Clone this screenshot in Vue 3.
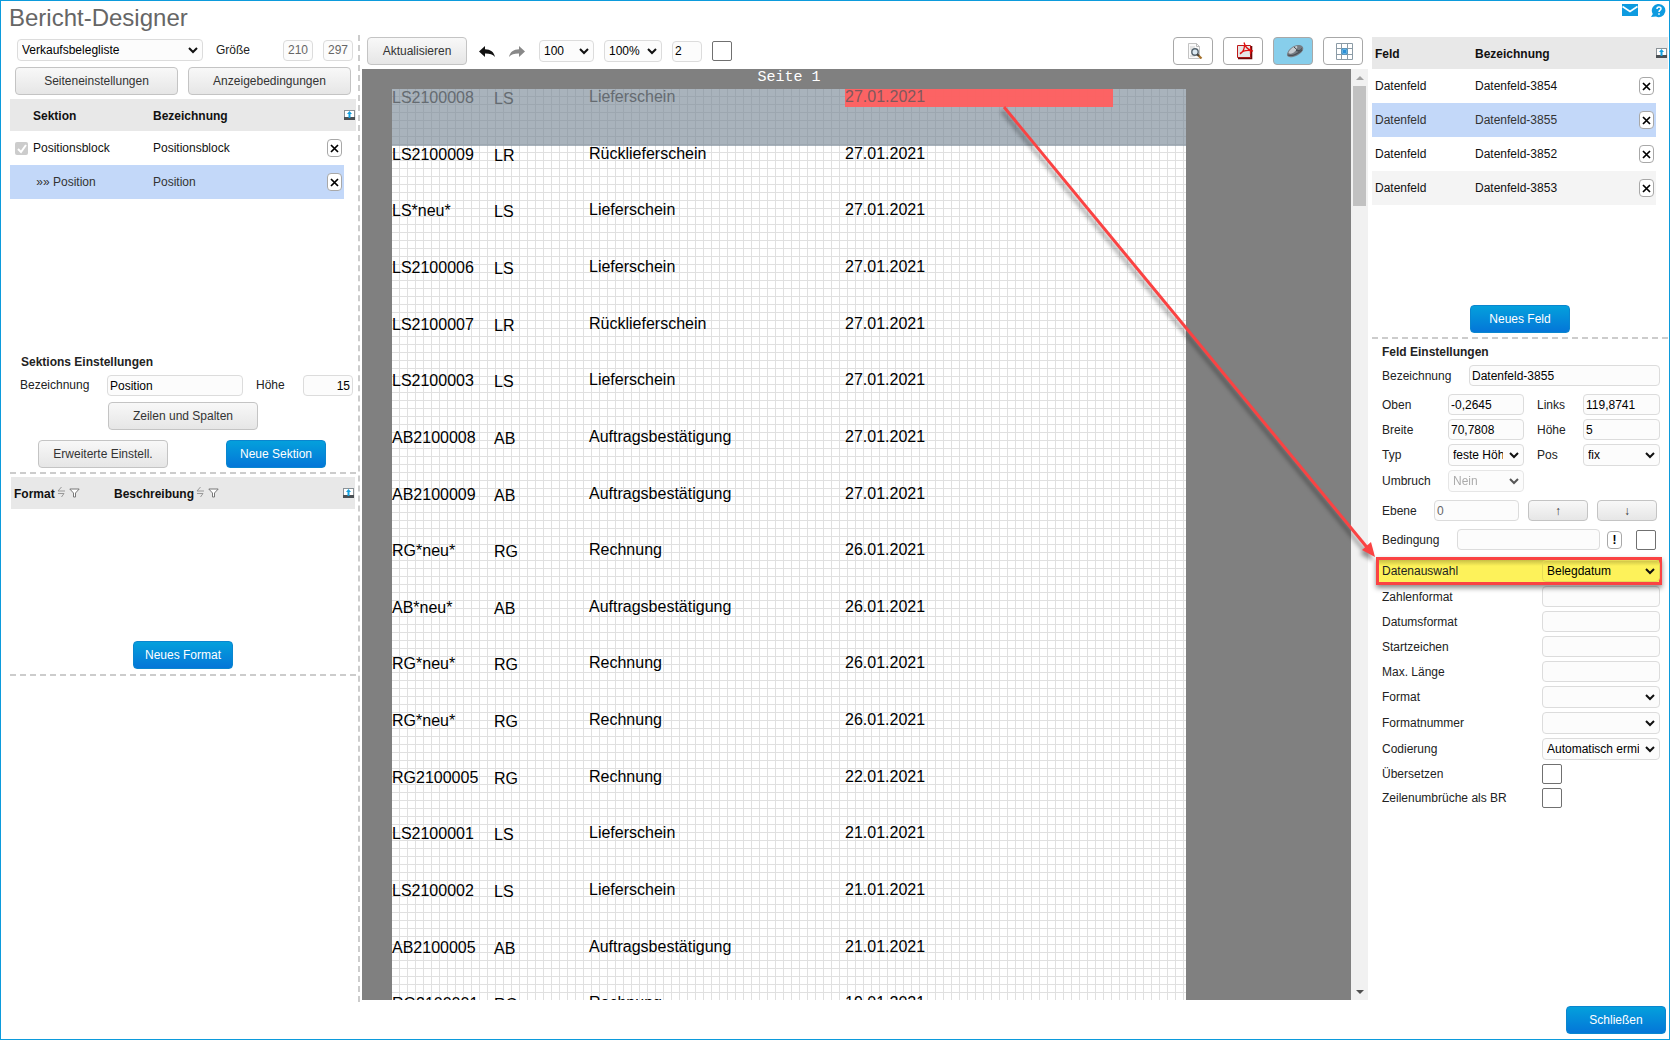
<script setup>
import { ref } from 'vue'

const report = ref('Verkaufsbelegliste')
const selectedField = ref('Datenfeld-3855')

const fields = ['Datenfeld-3854', 'Datenfeld-3855', 'Datenfeld-3852', 'Datenfeld-3853']

const types = {
  LS: 'Lieferschein',
  LR: 'Rücklieferschein',
  AB: 'Auftragsbestätigung',
  RG: 'Rechnung',
}

const documents = [
  ['LS2100008', 'LS', '27.01.2021'],
  ['LS2100009', 'LR', '27.01.2021'],
  ['LS*neu*', 'LS', '27.01.2021'],
  ['LS2100006', 'LS', '27.01.2021'],
  ['LS2100007', 'LR', '27.01.2021'],
  ['LS2100003', 'LS', '27.01.2021'],
  ['AB2100008', 'AB', '27.01.2021'],
  ['AB2100009', 'AB', '27.01.2021'],
  ['RG*neu*', 'RG', '26.01.2021'],
  ['AB*neu*', 'AB', '26.01.2021'],
  ['RG*neu*', 'RG', '26.01.2021'],
  ['RG*neu*', 'RG', '26.01.2021'],
  ['RG2100005', 'RG', '22.01.2021'],
  ['LS2100001', 'LS', '21.01.2021'],
  ['LS2100002', 'LS', '21.01.2021'],
  ['AB2100005', 'AB', '21.01.2021'],
  ['RG2100001', 'RG', '19.01.2021'],
]

const textOptions = [
  { id: 'zahlenformat', label: 'Zahlenformat' },
  { id: 'datumsformat', label: 'Datumsformat' },
  { id: 'startzeichen', label: 'Startzeichen' },
  { id: 'maxlaenge', label: 'Max. Länge' },
]
const selectOptions = [
  { id: 'format', label: 'Format', value: '' },
  { id: 'formatnummer', label: 'Formatnummer', value: '' },
  { id: 'codierung', label: 'Codierung', value: 'Automatisch ermitteln' },
]
const checkOptions = [
  { id: 'uebersetzen', label: 'Übersetzen' },
  { id: 'umbruchbr', label: 'Zeilenumbrüche als BR' },
]
</script>

<template>
  <div class="designer">
    <svg class="symbols" aria-hidden="true">
      <symbol id="i-export" viewBox="0 0 11 10">
        <path d="M0 0h11v10H0z" fill="#8b9297" />
        <path d="M1 1h9v6H1z" fill="#fff" />
        <path d="M0 7h11v3H0z" fill="#4b5054" />
        <path d="M5.500 1L8 4H6.500v4h-2V4H3z" fill="#14a0de" />
      </symbol>
      <symbol id="i-x" viewBox="0 0 9 9">
        <path d="M1 1l7 7M8 1L1 8" stroke="#000" stroke-width="1.700" fill="none" />
      </symbol>
      <symbol id="i-sort" viewBox="0 0 8 12">
        <path d="M4.500 1L1 5h7M1 7.500h6L4.500 11" stroke="#999" fill="none" />
      </symbol>
      <symbol id="i-filter" viewBox="0 0 11 10">
        <path d="M.8 1h9.400L6.500 5v4H4.500V5z" stroke="#777" fill="#fff" />
      </symbol>
    </svg>

    <header class="head">
      <h1>Bericht-Designer</h1>
      <nav class="head-links">
        <a href="#mail" aria-label="Nachricht">
          <svg width="16" height="12" viewBox="0 0 16 12"><path d="M0 0h16v12H0z" fill="#0e9be0" /><path d="M.5 2.500L8 7.500l7.500-5" stroke="#fff" stroke-width="1.600" fill="none" /></svg>
        </a>
        <a href="#hilfe" aria-label="Hilfe">
          <svg width="15" height="14" viewBox="0 0 15 14"><path d="M8 0a6.600 6.600 0 1 1-3 12.600L0 13l1.800-3A6.600 6.600 0 0 1 8 0z" fill="#0e9be0" /><path d="M6 5c0-2.600 4-2.600 4-.3C10 6.200 8 6.200 8 8" stroke="#fff" stroke-width="1.500" fill="none" /><path d="M7.200 9.200h1.600v1.600H7.200z" fill="#fff" /></svg>
        </a>
      </nav>
    </header>

    <main class="main">
      <aside class="left">
        <div class="line report-line">
          <select v-model="report" class="grow" aria-label="Bericht"><option>Verkaufsbelegliste</option></select>
          <label class="size-label" for="breite-mm">Größe</label>
          <input id="breite-mm" class="size" value="210" disabled>
          <input class="size" value="297" aria-label="Höhe in mm" disabled>
        </div>
        <div class="line page-buttons">
          <button class="btn">Seiteneinstellungen</button>
          <button class="btn">Anzeigebedingungen</button>
        </div>

        <div class="section-list">
          <table class="list">
            <colgroup><col class="c-tick"><col class="c-sec"><col><col class="c-del"><col class="c-end"></colgroup>
            <thead>
              <tr><th></th><th>Sektion</th><th>Bezeichnung</th><th></th><th><svg class="export"><use href="#i-export" /></svg></th></tr>
            </thead>
            <tbody>
              <tr>
                <td><input class="tick" type="checkbox" aria-label="Positionsblock" checked disabled></td>
                <td>Positionsblock</td><td>Positionsblock</td>
                <td><button class="del" aria-label="Löschen"><svg><use href="#i-x" /></svg></button></td>
                <td class="blank"></td>
              </tr>
              <tr class="selected">
                <td></td><td>&nbsp;»» Position</td><td>Position</td>
                <td><button class="del" aria-label="Löschen"><svg><use href="#i-x" /></svg></button></td>
                <td class="blank"></td>
              </tr>
            </tbody>
          </table>
        </div>

        <section class="section-form">
          <h2>Sektions Einstellungen</h2>
          <div class="line">
            <label class="sec-name" for="sek-bez">Bezeichnung</label>
            <input id="sek-bez" class="grow" value="Position">
            <label class="sec-height" for="sek-hoehe">Höhe</label>
            <input id="sek-hoehe" class="num" value="15">
          </div>
          <button class="btn rows-btn">Zeilen und Spalten</button>
          <div class="line section-actions">
            <button class="btn ext-btn">Erweiterte Einstell.</button>
            <button class="btn primary">Neue Sektion</button>
          </div>
        </section>

        <section class="format-block">
          <table class="list format-list">
            <colgroup><col class="c-format"><col><col class="c-end"></colgroup>
            <thead>
              <tr>
                <th>Format<svg class="sort"><use href="#i-sort" /></svg><svg class="filter"><use href="#i-filter" /></svg></th>
                <th>Beschreibung<svg class="sort"><use href="#i-sort" /></svg><svg class="filter"><use href="#i-filter" /></svg></th>
                <th><svg class="export"><use href="#i-export" /></svg></th>
              </tr>
            </thead>
          </table>
          <button class="btn primary format-btn">Neues Format</button>
        </section>
      </aside>

      <section class="middle">
        <div class="toolbar">
          <button class="btn refresh">Aktualisieren</button>
          <button class="plain" aria-label="Rückgängig">
            <svg width="16" height="12" viewBox="0 0 16 12"><path d="M0 5.500L6 0v3.300c5.500.2 9 2.700 10 7.700-2.500-3-5.500-3.700-10-3.600V11z" fill="#111" /></svg>
          </button>
          <button class="plain redo" aria-label="Wiederholen">
            <svg width="16" height="12" viewBox="0 0 16 12"><path d="M16 5.500L10 0v3.300C4.500 3.500 1 6 0 11c2.500-3 5.500-3.700 10-3.600V11z" fill="#888" /></svg>
          </button>
          <select class="rowsel" aria-label="Anzahl"><option>100</option></select>
          <select class="zoomsel" aria-label="Zoom"><option>100%</option></select>
          <input class="size" value="2" aria-label="Raster">
          <input class="box" type="checkbox" aria-label="Raster aktiv">
          <span class="tools">
            <button class="tool" aria-label="Vorschau">
              <svg width="16" height="16" viewBox="0 0 16 16"><path d="M1.500.5h8l3 3v12h-11z" fill="#fafafa" stroke="#c3c3c3" /><path d="M9.500.5v3h3" fill="none" stroke="#bbb" /><path d="M3 4h5M3 6h2M3 13h5" stroke="#ccc" /><circle cx="8" cy="9" r="3.200" fill="#dce9f2" stroke="#56646e" stroke-width="1.400" /><path d="M10.500 11.500l4 4" stroke="#a5702a" stroke-width="2.200" /><path d="M10 11l1.800 1.800" stroke="#444" stroke-width="1.800" /></svg>
            </button>
            <button class="tool" aria-label="PDF">
              <svg width="18" height="18" viewBox="0 0 18 18"><path d="M1.500 3.500h13v12h-13z" fill="#e6e6e6" stroke="#c01818" /><path d="M2 16.500h13.500V4" stroke="#6e0a0a" stroke-width="1.600" fill="none" /><path d="M8 .5c1 4 3 7 8 8.500M8.500 3c0 4-1.500 7-4.500 9M4 11.500c3-3 7-4 13-2.500M14.500 6v6" stroke="#e01010" stroke-width="1.300" fill="none" /></svg>
            </button>
            <button class="tool active" aria-label="Maus">
              <svg width="18" height="14" viewBox="0 0 18 14"><path d="M1 10C2 5 8 1 12 1c4 0 6 2 5 5-1 3-6 6-10 7-3 .6-6.500 0-6-3z" fill="#777d84" /><path d="M2.500 8.500C4 5 8 2.300 11 2c1 2-1 5-4 7-2 1-4 1-4.500-.5z" fill="#c6cbd0" /><path d="M8 3l5 4.500M10 6.500c2 1 4 0 6-2" stroke="#40454b" fill="none" /><path d="M2 11c4 1.500 10-1 14-5" stroke="#4c5157" stroke-width="1.300" fill="none" /></svg>
            </button>
            <button class="tool" aria-label="Raster">
              <svg width="17" height="17" viewBox="0 0 17 17"><path d="M.5.500h16v16H.5zM5.500.500v16M11.500.500v16M.5 5.500h16M.5 11.500h16" fill="none" stroke="#8b9ba6" /><path d="M6 6h5v5H6z" fill="#9ed3f2" stroke="#2f8fd0" /><path d="M7 7h3v3H7z" fill="#2a8fd6" /></svg>
            </button>
          </span>
        </div>

        <div class="viewer">
          <div class="canvas">
            <div class="page">
              <div class="page-title">Seite 1</div>
              <div class="paper">
                <div v-for="(doc, i) in documents" :key="i" class="record" :class="{ current: i === 0 }">
                  <span class="no">{{ doc[0] }}</span>
                  <span class="kind">{{ doc[1] }}</span>
                  <span class="name">{{ types[doc[1]] }}</span>
                  <span class="date">{{ doc[2] }}</span>
                </div>
              </div>
            </div>
          </div>
          <div class="scrollbar" aria-hidden="true">
            <span class="up"></span><span class="thumb"></span><span class="down"></span>
          </div>
        </div>
      </section>

      <aside class="right">
        <div class="field-list">
          <table class="list">
            <colgroup><col class="c-field"><col><col class="c-del"><col class="c-end"></colgroup>
            <thead>
              <tr><th>Feld</th><th>Bezeichnung</th><th></th><th><svg class="export"><use href="#i-export" /></svg></th></tr>
            </thead>
            <tbody>
              <tr v-for="name in fields" :key="name" :class="{ selected: name === selectedField }" @click="selectedField = name">
                <td>Datenfeld</td><td>{{ name }}</td>
                <td><button class="del" aria-label="Löschen"><svg><use href="#i-x" /></svg></button></td>
                <td class="blank"></td>
              </tr>
            </tbody>
          </table>
          <button class="btn primary new-field">Neues Feld</button>
        </div>

        <section class="field-form">
          <h2>Feld Einstellungen</h2>
          <div class="line wide-gap">
            <label class="f-name" for="f-bez">Bezeichnung</label>
            <input id="f-bez" class="grow" value="Datenfeld-3855">
          </div>
          <div class="line">
            <label class="f-a" for="f-oben">Oben</label><input id="f-oben" class="f-in" value="-0,2645">
            <label class="f-b" for="f-links">Links</label><input id="f-links" class="grow" value="119,8741">
          </div>
          <div class="line">
            <label class="f-a" for="f-breite">Breite</label><input id="f-breite" class="f-in" value="70,7808">
            <label class="f-b" for="f-hoehe">Höhe</label><input id="f-hoehe" class="grow" value="5">
          </div>
          <div class="line">
            <label class="f-a" for="f-typ">Typ</label><select id="f-typ" class="f-in"><option>feste Höhe</option></select>
            <label class="f-b" for="f-pos">Pos</label><select id="f-pos" class="grow"><option>fix</option></select>
          </div>
          <div class="line wide-gap">
            <label class="f-a" for="f-umbruch">Umbruch</label><select id="f-umbruch" class="f-in" disabled><option>Nein</option></select>
          </div>
          <div class="line wide-gap">
            <label class="f-level" for="f-ebene">Ebene</label><input id="f-ebene" class="level" value="0" disabled>
            <button class="btn arrow">↑</button><button class="btn arrow">↓</button>
          </div>
          <div class="line condition">
            <label class="f-cond" for="f-bed">Bedingung</label><input id="f-bed" class="grow">
            <button class="del bang">!</button><input class="box cond-box" type="checkbox" aria-label="Bedingung aktiv">
          </div>
          <div class="line marked">
            <label for="f-daten">Datenauswahl</label><select id="f-daten" class="opt"><option>Belegdatum</option></select>
          </div>
          <div v-for="o in textOptions" :key="o.id" class="line">
            <label :for="o.id">{{ o.label }}</label><input :id="o.id" class="opt">
          </div>
          <div v-for="o in selectOptions" :key="o.id" class="line">
            <label :for="o.id">{{ o.label }}</label><select :id="o.id" class="opt"><option>{{ o.value }}</option></select>
          </div>
          <div v-for="o in checkOptions" :key="o.id" class="line">
            <label :for="o.id">{{ o.label }}</label><span class="opt"><input :id="o.id" class="box" type="checkbox"></span>
          </div>
        </section>
      </aside>

      <svg class="pointer" width="380" height="460" viewBox="0 0 380 460" aria-hidden="true">
        <path d="M4 3L370 447" stroke="#fa4343" stroke-width="3" />
        <path d="M375 453L362 446L371 438z" fill="#fa4343" />
      </svg>
    </main>

    <footer class="foot"><button class="btn primary">Schließen</button></footer>
  </div>
</template>

<style>
body { margin: 0; }
</style>

<style scoped>
* { box-sizing: border-box; }
.designer {
  display: flex;
  flex-direction: column;
  height: 100vh;
  border: 1px solid #0c9bdc;
  background: #fff;
  color: #222;
  font: 12px/16px "Liberation Sans", Arial, sans-serif;
  overflow: hidden;
}
.symbols { position: absolute; width: 0; height: 0; }
.head {
  display: flex;
  justify-content: space-between;
  flex: none;
  height: 34px;
  padding: 2px 3px 0 8px;
}
h1 { margin: 0; font-size: 24px; line-height: 30px; font-weight: 400; color: #666; }
.head-links { display: flex; gap: 13px; }
.head-links svg { display: block; margin-top: 1px; }
.main {
  position: relative;
  display: grid;
  grid-template-columns: 359px minmax(0, 1fr) 297px;
  flex: 1;
  min-height: 0;
}

/* controls */
input, select, button { font: inherit; color: #000; margin: 0; }
input, select {
  min-width: 0;
  height: 21px;
  border: 1px solid #dcdcdc;
  border-radius: 4px;
  background-color: #fcfcfc;
  padding: 0 2px;
}
select {
  appearance: none;
  height: 22px;
  padding: 0 20px 0 4px;
  background-image: url("data:image/svg+xml,%3Csvg xmlns='http://www.w3.org/2000/svg' width='10' height='7'%3E%3Cpath d='M1 1l4 4 4-4' fill='none' stroke='%23111' stroke-width='2'/%3E%3C/svg%3E");
  background-repeat: no-repeat;
  background-position: right 4px center;
}
input:disabled { color: #666; }
select:disabled { color: #888; opacity: .7; }
.grow { flex: 1; }
.btn {
  height: 28px;
  padding: 0;
  border: 1px solid #c4c4c4;
  border-radius: 4px;
  background: linear-gradient(#f8f8f8, #e6e6e6);
  color: #333;
}
.primary {
  width: 100px;
  border-color: #0a86cf;
  background: linear-gradient(#04a0dc, #0476d8);
  color: #fff;
}
.box {
  appearance: none;
  flex: none;
  display: block;
  width: 20px;
  height: 20px;
  padding: 0;
  border: 1px solid #707070;
  border-radius: 2px;
  background: #fff;
}
.del {
  display: flex;
  align-items: center;
  justify-content: center;
  width: 15px;
  height: 18px;
  padding: 0;
  border: 1px solid #a8a8a8;
  border-radius: 4px;
  background: #fff;
}
.del svg { width: 9px; height: 9px; }
.line { display: flex; align-items: center; }
h2 { margin: 0; font-size: 12px; line-height: 16px; font-weight: 700; }

/* lists */
.list { width: 100%; table-layout: fixed; border-collapse: collapse; color: #111; }
.list th { height: 32px; padding: 2px 0 0; background: #e8e8e8; text-align: left; color: #111; }
.list td { height: 34px; padding: 0; }
.list tbody tr:nth-child(4) td { background: #f4f4f4; }
.list tbody tr.selected td { background: #c3d8f9; color: #333; }
.list tbody tr td.blank { background: #fff; }
.c-tick { width: 23px; }
.c-sec { width: 120px; }
.c-del { width: 17px; }
.c-end { width: 12px; }
.c-field { width: 100px; }
.c-format { width: 100px; }
.export { display: block; width: 11px; height: 10px; margin-bottom: 3px; }
.sort { width: 8px; height: 12px; margin-left: 2px; }
.filter { width: 11px; height: 10px; margin-left: 4px; }
.tick {
  appearance: none;
  display: block;
  width: 13px;
  height: 13px;
  margin-left: 5px;
  padding: 0;
  border: 0;
  border-radius: 2px;
  background: #ccc url("data:image/svg+xml,%3Csvg xmlns='http://www.w3.org/2000/svg' width='13' height='13'%3E%3Cpath d='M3 7l3 3 5-7' fill='none' stroke='%23fff' stroke-width='2'/%3E%3C/svg%3E");
}

/* left */
.left { padding: 4px 2px 0 9px; border-right: 2px dashed #ccc; }
.report-line { padding: 0 3px 0 7px; }
.size-label { width: 67px; margin-left: 13px; }
.size { width: 30px; text-align: center; }
.size + .size { margin-left: 10px; }
.page-buttons { gap: 10px; margin-top: 6px; padding: 0 5px; }
.page-buttons .btn { flex: 1; }
.section-list { height: 255px; margin-top: 4px; }
.section-form { height: 120px; padding: 0 3px 0 10px; border-bottom: 2px dashed #ccc; }
.section-form h2 { margin: 0 0 5px 1px; }
.section-form label { padding-bottom: 2px; }
.sec-name { width: 87px; }
.sec-height { width: 47px; margin-left: 13px; }
.num { width: 50px; text-align: right; }
.rows-btn { display: block; width: 150px; margin: 6px 0 10px 88px; }
.section-actions { justify-content: space-between; padding: 0 27px 0 18px; }
.ext-btn { width: 130px; }
.format-block { height: 202px; padding: 3px 1px 0; border-bottom: 2px dashed #ccc; }
.format-list th { padding-left: 3px; }
.format-list th:last-child { padding-left: 0; }
.format-btn { display: block; margin: 132px 0 0 122px; }

/* middle */
.middle { display: flex; flex-direction: column; min-width: 0; min-height: 0; padding: 2px 4px 2px 2px; }
.toolbar { display: flex; align-items: center; flex: none; height: 28px; margin: 0 5px 4px; }
.refresh { width: 100px; }
.plain { display: block; height: 16px; margin-left: 12px; padding: 0; border: 0; background: none; }
.redo { margin-left: 14px; }
.plain svg { display: block; margin-top: 2px; }
.rowsel { width: 55px; margin-left: 14px; }
.zoomsel { width: 58px; margin: 0 10px; }
.toolbar .size { text-align: left; }
.toolbar .box { margin-left: 10px; }
.tools { display: flex; gap: 10px; margin-left: auto; }
.tool {
  display: flex;
  align-items: center;
  justify-content: center;
  width: 40px;
  height: 28px;
  padding: 0 0 0 3px;
  border: 1px solid #a8a8a8;
  border-radius: 4px;
  background: #fff;
}
.tool.active { background: #87ceeb; }
.viewer { display: flex; flex: 1; min-height: 0; }
.canvas { flex: 1; min-width: 0; overflow: hidden; background: #808080; }
.page { width: 794px; margin-left: 30px; }
.page-title {
  height: 20px;
  text-align: center;
  color: #fff;
  font: 15px/18px "Liberation Mono", "Courier New", monospace;
}
.paper {
  display: grid;
  grid-auto-rows: 1fr;
  height: 963px;
  background:
    repeating-linear-gradient(to right, transparent 0 7px, #e0e0e0 7px 8px),
    repeating-linear-gradient(to bottom, transparent 0 7px, #e0e0e0 7px 8px),
    #fff;
}
.record {
  display: grid;
  grid-template-columns: 102px 95px 256px 268px;
  align-items: start;
  color: #000;
  font-size: 16px;
  line-height: 16px;
}
.no { padding-top: 1px; }
.kind { padding-top: 2px; }
.current { background: rgba(112, 128, 144, .6); color: #656b71; }
.current .date { padding-bottom: 2px; background: rgba(255, 96, 96, .96); color: #80585c; }
.scrollbar {
  display: flex;
  flex-direction: column;
  align-items: center;
  width: 17px;
  background: #f1f1f1;
}
.up, .down { border: 4px solid transparent; border-top: 0; border-bottom-color: #a3a3a3; margin: 7px 0 6px; }
.down { border: 4px solid transparent; border-bottom: 0; border-top-color: #505050; margin-top: auto; }
.thumb { width: 13px; height: 120px; background: #c1c1c1; }

/* right */
.right { padding: 2px 1px 0 0; }
.right .list th:first-child, .right .list td:first-child { padding-left: 3px; }
.right .list th:nth-child(2), .right .list td:nth-child(2) { padding-left: 3px; }
.field-list { height: 302px; border-bottom: 2px dashed #ccc; }
.new-field { display: block; margin: 100px auto 0; }
.field-form { padding: 5px 8px 0 10px; }
.field-form h2 { margin-bottom: 5px; }
.field-form .line { margin-bottom: 4px; }
.field-form .line.wide-gap { margin-bottom: 8px; }
.field-form .line.condition { margin-bottom: 10px; }
.f-name { width: 87px; }
.f-a { width: 66px; }
.f-in { width: 76px; }
.f-b { width: 46px; margin-left: 13px; }
.f-level { width: 52px; }
.level { width: 85px; }
.arrow { width: 60px; height: 21px; margin-left: 9px; }
.f-cond { width: 75px; }
.bang { margin: 0 14px 0 7px; font-weight: 700; }
.cond-box { margin-right: 4px; }
.opt { width: 118px; margin-left: auto; }
.marked { position: relative; isolation: isolate; }
.marked select { background-color: transparent; border-color: #e6db55; }
.marked::before {
  content: "";
  position: absolute;
  z-index: -1;
  inset: -3px -2px -3px -6px;
  border: 3px solid #fa4343;
  background: linear-gradient(#c9bf45, #fdf25a 6px);
  box-shadow: 0 3px 5px rgba(0, 0, 0, .45);
}

.pointer {
  position: absolute;
  top: 69px;
  right: 289px;
  pointer-events: none;
  filter: drop-shadow(-2px 4px 2px rgba(0, 0, 0, .4));
}

.foot { display: flex; justify-content: flex-end; flex: none; height: 37px; padding: 4px 3px 0 0; }
</style>
